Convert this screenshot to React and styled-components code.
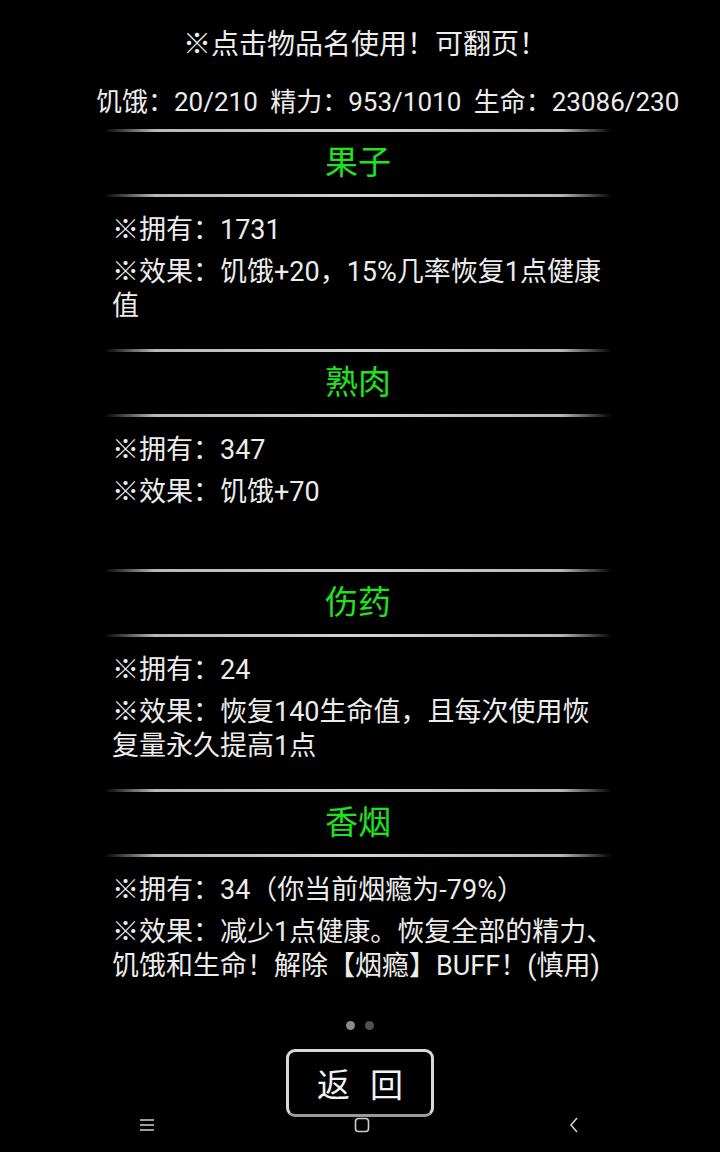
import styled, { createGlobalStyle } from 'styled-components';

const items = [
  {
    name: '果子',
    own: '※拥有：1731',
    effect: '※效果：饥饿+20，15%几率恢复1点健康值',
  },
  {
    name: '熟肉',
    own: '※拥有：347',
    effect: '※效果：饥饿+70',
  },
  {
    name: '伤药',
    own: '※拥有：24',
    effect: '※效果：恢复140生命值，且每次使用恢复量永久提高1点',
  },
  {
    name: '香烟',
    own: '※拥有：34（你当前烟瘾为-79%）',
    effect: '※效果：减少1点健康。恢复全部的精力、饥饿和生命！解除【烟瘾】BUFF！(慎用)',
  },
];

const ItemPage = () => {
  return (
    <>
      <GlobalStyle />
      <St.Screen>
        <St.Tip>※点击物品名使用！可翻页！</St.Tip>
        <St.Stats>饥饿：20/210 精力：953/1010 生命：23086/230</St.Stats>

        <St.List>
          {items.map((item) => (
            <St.Item key={item.name}>
              <St.Divider />
              <St.Name>{item.name}</St.Name>
              <St.Divider />
              <St.Body>
                <St.Line>{item.own}</St.Line>
                <St.Line>{item.effect}</St.Line>
              </St.Body>
            </St.Item>
          ))}
        </St.List>

        <St.Dots>
          <St.Dot $active />
          <St.Dot />
        </St.Dots>

        <St.BackButton type='button'>返回</St.BackButton>

        <St.NavBar>
          <svg width='16' height='14' viewBox='0 0 16 14'>
            <path d='M1 2h14M1 7h14M1 12h14' stroke='#cfcfcf' strokeWidth='1.6' />
          </svg>
          <svg width='16' height='16' viewBox='0 0 16 16'>
            <rect x='1.5' y='1.5' width='13' height='13' rx='3' fill='none' stroke='#cfcfcf' strokeWidth='1.6' />
          </svg>
          <svg width='12' height='18' viewBox='0 0 12 18'>
            <path d='M9 2L3 9l6 7' fill='none' stroke='#cfcfcf' strokeWidth='1.6' />
          </svg>
        </St.NavBar>
      </St.Screen>
    </>
  );
};

export default ItemPage;

const GlobalStyle = createGlobalStyle`
  html, body {
    margin: 0;
    padding: 0;
    background: #000;
  }
  * {
    box-sizing: border-box;
  }
`;

const St = {
  Screen: styled.main`
    position: relative;
    display: flex;
    flex-direction: column;
    align-items: center;

    width: 720px;
    height: 1152px;
    overflow: hidden;

    background: #000;
    color: #ececec;
    font-family: Roboto, 'Noto Sans CJK SC', sans-serif;
  `,
  Tip: styled.p`
    margin: 25px 0 0 10px;

    font-size: 28px;
    line-height: 40px;
  `,
  Stats: styled.p`
    align-self: flex-start;

    margin: 20px 0 0 96px;

    font-size: 26px;
    line-height: 34px;
    white-space: nowrap;
    word-spacing: 6px;
  `,
  List: styled.section`
    display: flex;
    flex-direction: column;

    width: 508px;
    margin-top: 10px;
    margin-left: -4px;
  `,
  Item: styled.article`
    display: flex;
    flex-direction: column;

    height: 220px;
  `,
  Divider: styled.div`
    height: 3px;

    background: linear-gradient(
      to right,
      rgba(200, 200, 200, 0) 0%,
      #b8b8b8 10%,
      #d4d4d4 50%,
      #b8b8b8 90%,
      rgba(200, 200, 200, 0) 100%
    );
  `,
  Name: styled.h2`
    margin: 0;

    height: 62px;

    font-size: 33px;
    font-weight: 400;
    line-height: 62px;
    text-align: center;
    color: #1fe31f;
  `,
  Body: styled.div`
    display: flex;
    flex-direction: column;
    gap: 8px;

    height: 152px;
    padding: 16px 0 0 8px;
  `,
  Line: styled.p`
    flex-shrink: 0;
    width: 502px;
    margin: 0;

    font-size: 27px;
    line-height: 34px;
  `,
  Dots: styled.div`
    display: flex;
    gap: 10px;

    margin-top: 12px;
  `,
  Dot: styled.span`
    width: 9px;
    height: 9px;

    border-radius: 50%;
    background: ${({ $active }) => ($active ? '#8a8a8a' : '#505050')};
  `,
  BackButton: styled.button`
    width: 148px;
    height: 68px;
    margin-top: 19px;

    border: 3px solid #d8d8d8;
    border-bottom-color: #9a9a9a;
    border-radius: 9px;
    background: #000;

    color: #f2f2f2;
    font-family: 'Noto Sans CJK SC', sans-serif;
    font-size: 33px;
    line-height: 1;
    letter-spacing: 20px;
    text-indent: 20px;
  `,
  NavBar: styled.nav`
    position: absolute;
    left: 0;
    right: 0;
    bottom: 18px;

    display: flex;
    justify-content: space-between;
    align-items: center;

    padding: 0 140px 0 139px;
  `,
};
